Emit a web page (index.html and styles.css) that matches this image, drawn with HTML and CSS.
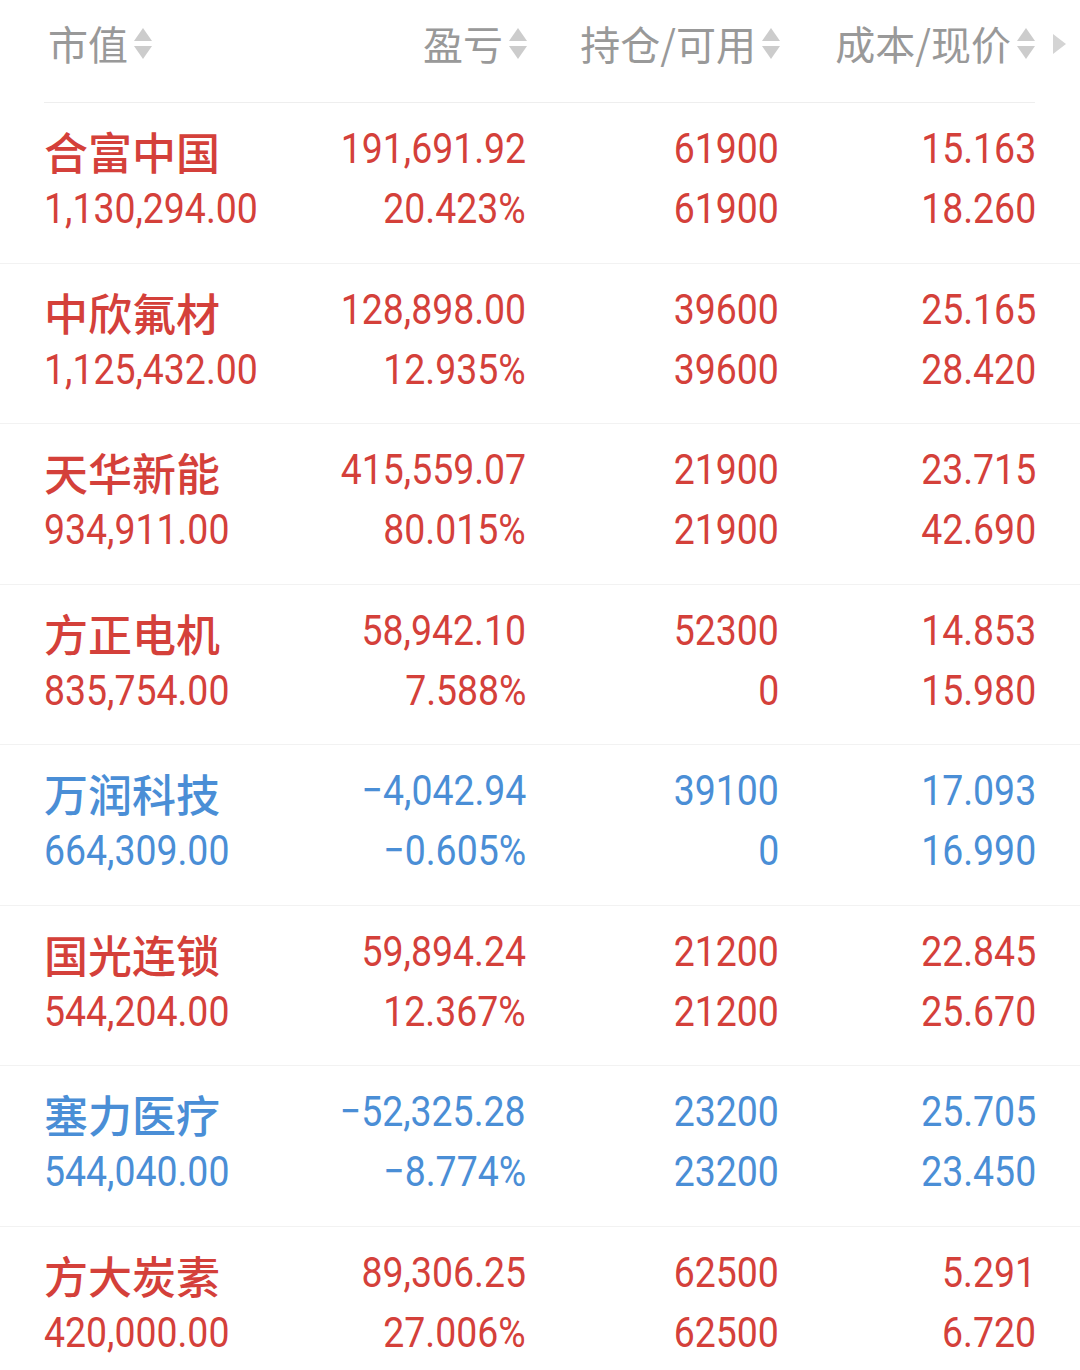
FILE: index.html
```html
<!DOCTYPE html>
<html lang="zh-CN">
<head>
<meta charset="utf-8">
<link rel="stylesheet" href="styles.css">
</head>
<body>
<div class="page">
  <div class="head">
    <div class="hc left">市值<span class="sort"><i class="up"></i><i class="down"></i></span></div>
    <div class="hc">盈亏<span class="sort"><i class="up"></i><i class="down"></i></span></div>
    <div class="hc">持仓/可用<span class="sort"><i class="up"></i><i class="down"></i></span></div>
    <div class="hc">成本/现价<span class="sort"><i class="up"></i><i class="down"></i></span></div>
    <span class="more"></span>
  </div>

  <div class="row red">
    <div class="c1"><div class="name">合富中国</div><div class="num"><span>1,130,294.00</span></div></div>
    <div class="c"><div class="num"><span>191,691.92</span></div><div class="num"><span>20.423%</span></div></div>
    <div class="c"><div class="num"><span>61900</span></div><div class="num"><span>61900</span></div></div>
    <div class="c"><div class="num"><span>15.163</span></div><div class="num"><span>18.260</span></div></div>
  </div>
  <div class="row red">
    <div class="c1"><div class="name">中欣氟材</div><div class="num"><span>1,125,432.00</span></div></div>
    <div class="c"><div class="num"><span>128,898.00</span></div><div class="num"><span>12.935%</span></div></div>
    <div class="c"><div class="num"><span>39600</span></div><div class="num"><span>39600</span></div></div>
    <div class="c"><div class="num"><span>25.165</span></div><div class="num"><span>28.420</span></div></div>
  </div>
  <div class="row red">
    <div class="c1"><div class="name">天华新能</div><div class="num"><span>934,911.00</span></div></div>
    <div class="c"><div class="num"><span>415,559.07</span></div><div class="num"><span>80.015%</span></div></div>
    <div class="c"><div class="num"><span>21900</span></div><div class="num"><span>21900</span></div></div>
    <div class="c"><div class="num"><span>23.715</span></div><div class="num"><span>42.690</span></div></div>
  </div>
  <div class="row red">
    <div class="c1"><div class="name">方正电机</div><div class="num"><span>835,754.00</span></div></div>
    <div class="c"><div class="num"><span>58,942.10</span></div><div class="num"><span>7.588%</span></div></div>
    <div class="c"><div class="num"><span>52300</span></div><div class="num"><span>0</span></div></div>
    <div class="c"><div class="num"><span>14.853</span></div><div class="num"><span>15.980</span></div></div>
  </div>
  <div class="row blue">
    <div class="c1"><div class="name">万润科技</div><div class="num"><span>664,309.00</span></div></div>
    <div class="c"><div class="num"><span>−4,042.94</span></div><div class="num"><span>−0.605%</span></div></div>
    <div class="c"><div class="num"><span>39100</span></div><div class="num"><span>0</span></div></div>
    <div class="c"><div class="num"><span>17.093</span></div><div class="num"><span>16.990</span></div></div>
  </div>
  <div class="row red">
    <div class="c1"><div class="name">国光连锁</div><div class="num"><span>544,204.00</span></div></div>
    <div class="c"><div class="num"><span>59,894.24</span></div><div class="num"><span>12.367%</span></div></div>
    <div class="c"><div class="num"><span>21200</span></div><div class="num"><span>21200</span></div></div>
    <div class="c"><div class="num"><span>22.845</span></div><div class="num"><span>25.670</span></div></div>
  </div>
  <div class="row blue">
    <div class="c1"><div class="name">塞力医疗</div><div class="num"><span>544,040.00</span></div></div>
    <div class="c"><div class="num"><span>−52,325.28</span></div><div class="num"><span>−8.774%</span></div></div>
    <div class="c"><div class="num"><span>23200</span></div><div class="num"><span>23200</span></div></div>
    <div class="c"><div class="num"><span>25.705</span></div><div class="num"><span>23.450</span></div></div>
  </div>
  <div class="row red last">
    <div class="c1"><div class="name">方大炭素</div><div class="num"><span>420,000.00</span></div></div>
    <div class="c"><div class="num"><span>89,306.25</span></div><div class="num"><span>27.006%</span></div></div>
    <div class="c"><div class="num"><span>62500</span></div><div class="num"><span>62500</span></div></div>
    <div class="c"><div class="num"><span>5.291</span></div><div class="num"><span>6.720</span></div></div>
  </div>
</div>
</body>
</html>
```

FILE: styles.css
```css
* { box-sizing: border-box; margin: 0; padding: 0; }
html, body { background: #fff; }
body {
  width: 1080px;
  height: 1370px;
  overflow: hidden;
  font-family: "Noto Sans CJK SC", "Noto Sans", sans-serif;
}
.page { width: 1080px; }

.head {
  position: relative;
  margin: 0 45px 0 44px;
  height: 103px;
  border-bottom: 1px solid #eeeeee;
  display: grid;
  grid-template-columns: 230px 253px 253px 255px;
  align-items: start;
  padding-top: 18px;
}
.hc {
  display: flex;
  align-items: center;
  justify-content: flex-end;
  font-size: 40px;
  line-height: 50px;
  color: #999999;
  white-space: nowrap;
}
.hc.left { justify-content: flex-start; padding-left: 4px; }
.sort {
  display: inline-flex;
  flex-direction: column;
  align-items: center;
  gap: 5px;
  margin-left: 6px;
  width: 18px;
}
.sort i { display: block; width: 0; height: 0; border-left: 9px solid transparent; border-right: 9px solid transparent; }
.sort .up { border-bottom: 13px solid #cccccc; }
.sort .down { border-top: 13px solid #cccccc; }
.more {
  position: absolute;
  right: -31px;
  top: 34px;
  width: 0; height: 0;
  border-top: 10px solid transparent;
  border-bottom: 10px solid transparent;
  border-left: 13px solid #d4d4d4;
}

.row {
  height: 160.5px;
  border-bottom: 1px solid #f2f2f2;
  display: grid;
  grid-template-columns: 231px 251px 253px 257px;
  padding: 15px 44px 0 44px;
}
.row.last { border-bottom: none; }
.red { color: #d4403a; }
.blue { color: #4a8ed6; }
.c { text-align: right; }
.c1 { text-align: left; }
.name {
  font-family: "Noto Sans CJK SC", sans-serif;
  font-weight: 500;
  font-size: 44px;
  line-height: 60px;
  height: 60px;
  white-space: nowrap;
  position: relative;
  top: 3px;
}
.num {
  font-family: Roboto, "Liberation Sans", sans-serif;
  font-weight: 400;
  font-size: 43px;
  line-height: 60px;
  height: 60px;
  white-space: nowrap;
}
.num span {
  display: inline-block;
  transform: scaleX(0.87);
  transform-origin: right center;
}
.c1 .num span { transform-origin: left center; }
```
